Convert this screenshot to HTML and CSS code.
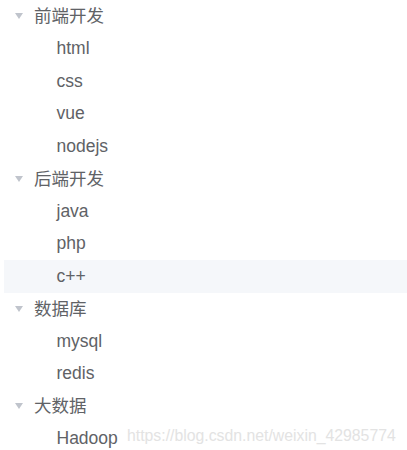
FILE: index.html
```html
<!DOCTYPE html>
<html>
<head>
<meta charset="utf-8">
<link rel="stylesheet" href="styles.css">
</head>
<body>
<div class="tree">
  <div class="node parent"><span class="caret"><i class="tri"></i></span><span class="label">前端开发</span></div>
  <div class="node child"><span class="caret"></span><span class="label">html</span></div>
  <div class="node child"><span class="caret"></span><span class="label">css</span></div>
  <div class="node child"><span class="caret"></span><span class="label">vue</span></div>
  <div class="node child"><span class="caret"></span><span class="label">nodejs</span></div>
  <div class="node parent"><span class="caret"><i class="tri"></i></span><span class="label">后端开发</span></div>
  <div class="node child"><span class="caret"></span><span class="label">java</span></div>
  <div class="node child"><span class="caret"></span><span class="label">php</span></div>
  <div class="node child hover"><span class="caret"></span><span class="label">c++</span></div>
  <div class="node parent"><span class="caret"><i class="tri"></i></span><span class="label">数据库</span></div>
  <div class="node child"><span class="caret"></span><span class="label">mysql</span></div>
  <div class="node child"><span class="caret"></span><span class="label">redis</span></div>
  <div class="node parent"><span class="caret"><i class="tri"></i></span><span class="label">大数据</span></div>
  <div class="node child"><span class="caret"></span><span class="label">Hadoop</span></div>
</div>
<div class="watermark">https://blog.csdn.net/weixin_42985774</div>
</body>
</html>
```
FILE: styles.css
```css
html, body {
  margin: 0;
  padding: 0;
  background: #fff;
  overflow: hidden;
}
body {
  position: relative;
  width: 407px;
  height: 450px;
  font-family: "Liberation Sans", "Noto Sans CJK SC", sans-serif;
  color: #606266;
  font-size: 17.5px;
}
.tree {
  margin-left: 4px;
}
.node {
  height: 32.5px;
  display: flex;
  align-items: center;
}
.node.child {
  padding-left: 22.5px;
}
.node.hover {
  background: #f5f7fa;
}
.caret {
  width: 15px;
  height: 15px;
  padding: 0 7.5px;
  display: flex;
  align-items: center;
  justify-content: center;
}
.tri {
  display: block;
  width: 0;
  height: 0;
  border-left: 4.5px solid transparent;
  border-right: 4.5px solid transparent;
  border-top: 6px solid #c0c4cc;
}
.label {
  white-space: nowrap;
}
.parent .label {
  padding-bottom: 3px;
}
.watermark {
  position: absolute;
  left: 127px;
  top: 427px;
  font-size: 15.8px;
  color: #e3e3e3;
  white-space: nowrap;
}
```
